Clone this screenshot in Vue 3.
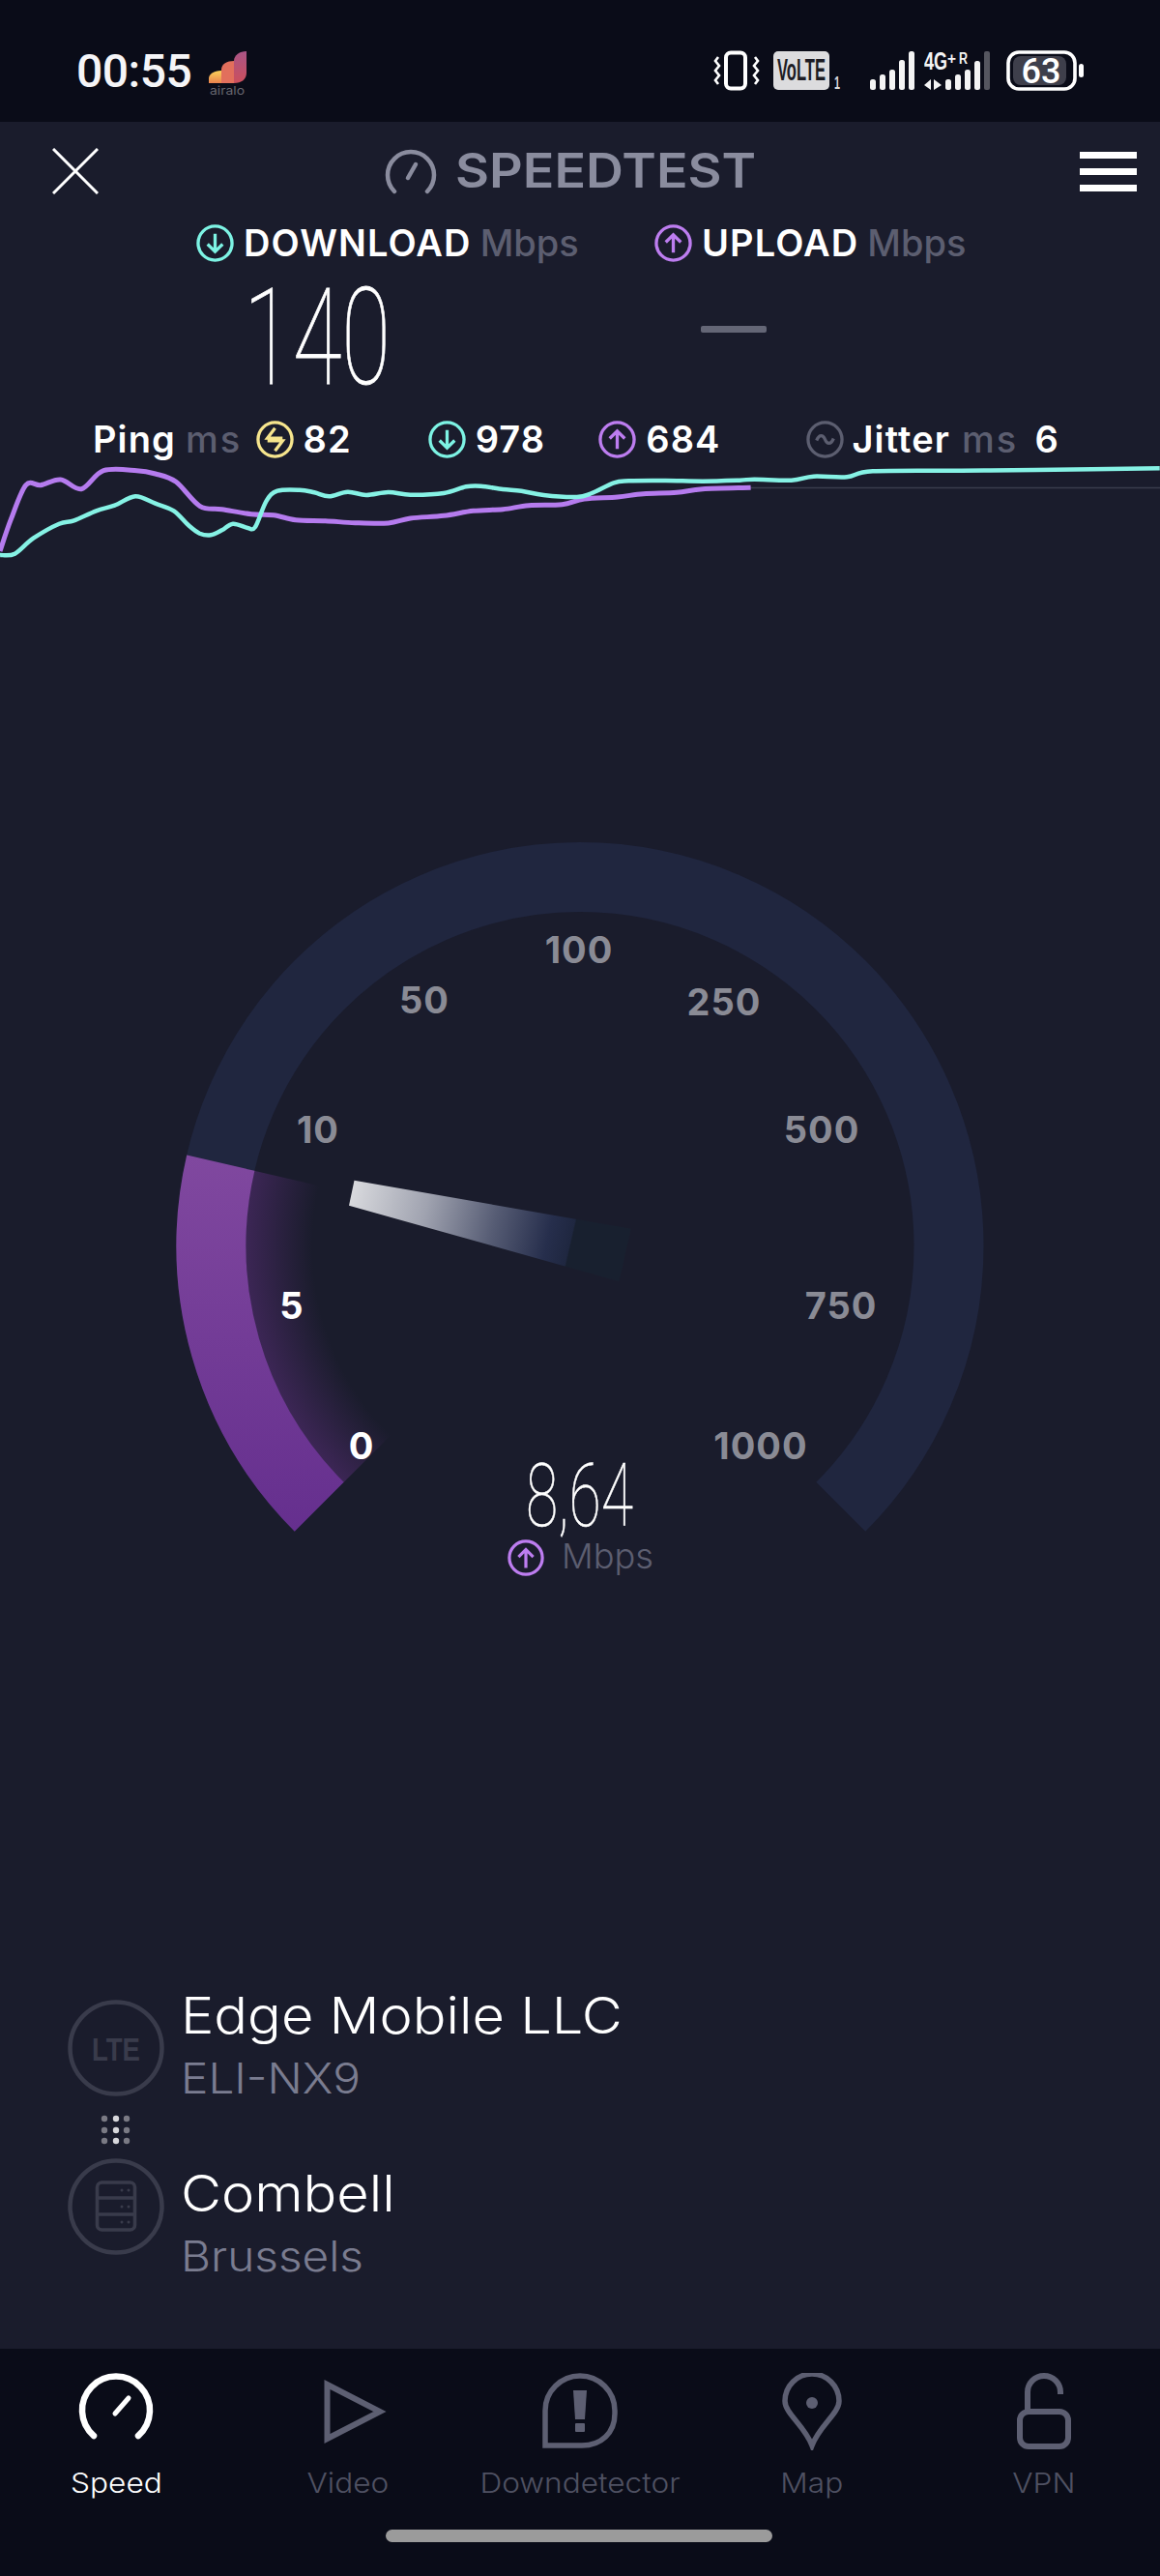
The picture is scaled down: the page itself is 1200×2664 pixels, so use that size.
<script setup>
// Raw speed samples, in chart-local coordinates (x scaled to the 1200px width).
const sx = 1 / 1.307
const toPts = (raw) => raw.map(([x, y]) => [x * sx, y / 3])

const downRaw = [[0,1002],[20,998],[45,950],[80,905],[100,895],[130,865],[155,848],[183,820],[210,842],[235,865],[255,910],[270,935],[285,940],[300,925],[315,905],[335,918],[345,915],[360,835],[375,803],[405,800],[425,808],[445,820],[470,806],[495,816],[525,807],[555,815],[600,810],[630,790],[650,788],[680,798],[705,803],[735,816],[780,822],[800,810],[830,778],[850,772],[900,771],[950,773],[1000,770],[1020,767],[1070,770],[1100,758],[1145,760],[1180,742],[1300,740],[1400,738],[1568,733]]
const upRaw = [[0,990],[15,890],[35,785],[55,785],[82,768],[110,797],[140,740],[185,740],[210,750],[238,775],[270,850],[300,860],[340,875],[370,878],[400,893],[440,896],[480,902],[525,903],[555,888],[600,880],[640,865],[680,860],[715,848],[760,845],[790,828],[835,822],[870,812],[915,808],[950,797],[1015,793]]

// Catmull-Rom through the samples so the trace stays smooth.
function smooth(pts) {
  let d = `M${pts[0][0].toFixed(1)} ${pts[0][1].toFixed(1)}`
  for (let i = 0; i < pts.length - 1; i++) {
    const p0 = pts[i - 1] || pts[i]
    const p1 = pts[i]
    const p2 = pts[i + 1]
    const p3 = pts[i + 2] || p2
    const c1 = [p1[0] + (p2[0] - p0[0]) / 6, p1[1] + (p2[1] - p0[1]) / 6]
    const c2 = [p2[0] - (p3[0] - p1[0]) / 6, p2[1] - (p3[1] - p1[1]) / 6]
    d += `C${c1[0].toFixed(1)} ${c1[1].toFixed(1)} ${c2[0].toFixed(1)} ${c2[1].toFixed(1)} ${p2[0].toFixed(1)} ${p2[1].toFixed(1)}`
  }
  return d
}
const downPath = smooth(toPts(downRaw))
const upPath = smooth(toPts(upRaw))

const ticks = [
  { t: '100', x: 599, y: 982 },
  { t: '50', x: 439, y: 1034 },
  { t: '250', x: 749, y: 1036 },
  { t: '10', x: 329, y: 1168 },
  { t: '500', x: 850, y: 1168 },
  { t: '5', x: 302, y: 1350, on: true },
  { t: '750', x: 870, y: 1350 },
  { t: '0', x: 374, y: 1495, on: true },
  { t: '1000', x: 787, y: 1495 },
]

const signalBars = [
  { x: 1, y: 29, h: 11 },
  { x: 11, y: 24, h: 16 },
  { x: 21, y: 19, h: 21 },
  { x: 31, y: 9, h: 31 },
  { x: 41, y: 0, h: 40 },
]
</script>

<template>
  <div class="screen">
    <header class="status">
      <div class="status-left">
        <span class="clock">00:55</span>
        <svg class="airalo" width="42" height="48" viewBox="0 0 42 48">
          <defs>
            <linearGradient id="airaloA" x1="0" y1="0" x2="0" y2="1">
              <stop offset="0" stop-color="#fbd35a" />
              <stop offset="1" stop-color="#e9824e" />
            </linearGradient>
            <linearGradient id="airaloC" x1="0" y1="0" x2="0" y2="1">
              <stop offset="0" stop-color="#a95586" />
              <stop offset="1" stop-color="#cc4f5c" />
            </linearGradient>
          </defs>
          <path d="M1 33V28C1 24 6 20 14 20V33Z" fill="url(#airaloA)" />
          <path d="M14 33V19C14 13 20 10 27 10V33Z" fill="#e26f5c" />
          <path d="M27 33V10C27 4 33 0 40 0V22C40 29 35 33 27 33Z" fill="url(#airaloC)" />
          <text x="2" y="45" class="airalo-word" textLength="36" lengthAdjust="spacingAndGlyphs">airalo</text>
        </svg>
      </div>
      <div class="status-right">
        <svg width="48" height="42" viewBox="0 0 48 42">
          <rect x="13" y="2.5" width="20" height="37" rx="5" fill="none" stroke="#fff" stroke-width="4" />
          <path d="M5 7L2 11L6 16L2 21L6 26L2 31L5 35M43 7L46 11L42 16L46 21L42 26L46 31L43 35" fill="none" stroke="#fff" stroke-width="2.6" />
        </svg>
        <div class="volte-wrap">
          <svg width="70" height="42" viewBox="0 0 70 42">
            <rect x="0" y="1" width="58" height="40" rx="5" fill="#dcdcde" />
            <text x="4" y="31" textLength="50" lengthAdjust="spacingAndGlyphs" class="volte">VoLTE</text>
            <text x="63" y="40" class="sim" textLength="6" lengthAdjust="spacingAndGlyphs">1</text>
          </svg>
        </div>
        <svg class="sig1" width="48" height="40" viewBox="0 0 48 40">
          <rect v-for="b in signalBars" :key="b.x" :x="b.x" :y="b.y" width="6" :height="b.h" rx="2.5" fill="#f4f4f4" />
        </svg>
        <svg class="sig2" width="72" height="42" viewBox="0 0 72 42">
          <text x="0" y="20" class="net" textLength="24" lengthAdjust="spacingAndGlyphs">4G</text>
          <text x="24" y="14" class="net-small" textLength="9" lengthAdjust="spacingAndGlyphs">+</text>
          <text x="36" y="14" class="net-small" textLength="9" lengthAdjust="spacingAndGlyphs">R</text>
          <path d="M7 30L0 36L7 41ZM10 30L18 36L10 41Z" fill="#f4f4f4" />
          <rect x="22" y="30" width="6" height="11" rx="2.5" fill="#f4f4f4" />
          <rect x="32" y="25" width="6" height="16" rx="2.5" fill="#f4f4f4" />
          <rect x="42" y="20" width="6" height="21" rx="2.5" fill="#f4f4f4" />
          <rect x="52" y="11" width="6" height="30" rx="2.5" fill="#f4f4f4" />
          <rect x="62" y="1" width="6" height="40" rx="2" fill="#55565f" />
        </svg>
        <svg class="batt" width="82" height="42" viewBox="0 0 82 42">
          <rect x="7" y="6" width="55" height="30" rx="8" fill="#3e3f4b" />
          <rect x="2" y="2" width="69" height="38" rx="11" fill="none" stroke="#fff" stroke-width="3.6" />
          <text x="36" y="34" text-anchor="middle" class="batt-num">63</text>
          <rect x="75" y="14" width="5" height="14" rx="2.5" fill="#fff" />
        </svg>
      </div>
    </header>

    <div class="appbar">
      <svg class="close" width="48" height="48" viewBox="0 0 48 48">
        <path d="M1 1L47 47M47 1L1 47" stroke="#fff" stroke-width="3" fill="none" />
      </svg>
      <div class="brand">
        <svg width="54" height="48" viewBox="0 0 54 48">
          <path d="M10 45A24 24 0 1 1 44 45" fill="none" stroke="#8a8c9e" stroke-width="4.5" stroke-linecap="round" />
          <path d="M24 31L32 17" fill="none" stroke="#8a8c9e" stroke-width="4.5" stroke-linecap="round" />
        </svg>
        <span class="brand-word">SPEEDTEST</span>
      </div>
      <div class="burger"><i></i><i></i><i></i></div>
    </div>

    <section class="results">
      <div class="result-col down">
        <div class="result-label">
          <svg class="badge" viewBox="0 0 40 40">
            <circle cx="20" cy="20" r="18" stroke="#7df3e4" />
            <path d="M20 10V29M12 21L20 29L28 21" stroke="#7df3e4" />
          </svg>
          <b>DOWNLOAD</b><span>Mbps</span>
        </div>
        <svg class="big-num" width="160" height="112" viewBox="0 0 160 112">
          <text x="-1" y="102" textLength="152" lengthAdjust="spacingAndGlyphs">140</text>
        </svg>
      </div>
      <div class="result-col up">
        <div class="result-label">
          <svg class="badge" viewBox="0 0 40 40">
            <circle cx="20" cy="20" r="18" stroke="#bd7df0" />
            <path d="M20 30V11M12 19L20 11L28 19" stroke="#bd7df0" />
          </svg>
          <b>UPLOAD</b><span>Mbps</span>
        </div>
        <div class="dash"></div>
      </div>
    </section>

    <section class="stats">
      <b class="s-ping">Ping</b><span class="s-ms">ms</span>
      <svg class="badge b-ping" viewBox="0 0 40 40">
        <circle cx="20" cy="20" r="18" stroke="#f6e58d" />
        <path d="M20 8L12 18.5H28M20 32L28 21.5H12" stroke="#f6e58d" />
      </svg>
      <b class="s-num">82</b>
      <svg class="badge b-down" viewBox="0 0 40 40">
        <circle cx="20" cy="20" r="18" stroke="#7df3e4" />
        <path d="M20 10V29M12 21L20 29L28 21" stroke="#7df3e4" />
      </svg>
      <b class="s-num">978</b>
      <svg class="badge b-up" viewBox="0 0 40 40">
        <circle cx="20" cy="20" r="18" stroke="#bd7df0" />
        <path d="M20 30V11M12 19L20 11L28 19" stroke="#bd7df0" />
      </svg>
      <b class="s-num">684</b>
      <svg class="badge b-jit" viewBox="0 0 40 40">
        <circle cx="20" cy="20" r="18" stroke="#5c5e70" />
        <path d="M11 21C14 14 18 15 20 20S26 26 29 19" stroke="#5c5e70" />
      </svg>
      <b class="s-ping">Jitter</b><span class="s-ms s-ms2">ms</span><b class="s-num s-six">6</b>
    </section>

    <svg class="chart" width="1200" height="100" viewBox="0 480 1200 100">
      <path d="M776 504.5H1200" stroke="#3a3c4c" stroke-width="1.5" fill="none" />
      <path :d="upPath" transform="translate(0 240)" stroke="#b57bee" stroke-width="5" fill="none" stroke-linejoin="round" />
      <path :d="downPath" transform="translate(0 240)" stroke="#86f2e5" stroke-width="4.5" fill="none" stroke-linejoin="round" />
    </svg>

    <svg class="gauge" width="1200" height="780" viewBox="0 860 1200 780">
      <defs>
        <linearGradient id="gaugeFill" gradientUnits="userSpaceOnUse" x1="0" y1="1195" x2="0" y2="1584">
          <stop offset="0" stop-color="#80489f" />
          <stop offset="1" stop-color="#652f8e" />
        </linearGradient>
        <radialGradient id="gaugeGlow" gradientUnits="userSpaceOnUse" cx="600" cy="1288.5" r="346">
          <stop offset="0.8" stop-color="#3c2655" stop-opacity="0" />
          <stop offset="1" stop-color="#3c2655" />
        </radialGradient>
        <linearGradient id="needle" gradientUnits="userSpaceOnUse" x1="364" y1="1233" x2="646" y2="1298">
          <stop offset="0" stop-color="#d8d9dd" />
          <stop offset="0.27" stop-color="#a0a3b0" />
          <stop offset="0.52" stop-color="#565c74" />
          <stop offset="0.72" stop-color="#262e4c" />
          <stop offset="0.8" stop-color="#1f2740" />
          <stop offset="0.805" stop-color="#18202f" />
          <stop offset="1" stop-color="#18202f" />
        </linearGradient>
      </defs>
      <path d="M330.2 1558.3A381.5 381.5 0 1 1 869.8 1558.3" fill="none" stroke="#20263f" stroke-width="72" />
      <path d="M355.3 1533.2A346 346 0 0 1 262.9 1210.7L600 1288.5Z" fill="url(#gaugeGlow)" />
      <path d="M330.2 1558.3A381.5 381.5 0 0 1 228.3 1202.7" fill="none" stroke="url(#gaugeFill)" stroke-width="72" />
      <polygon points="366.5,1220.7 652.7,1270.7 640.4,1325.3 361,1246.7" fill="url(#needle)" />
      <text v-for="k in ticks" :key="k.t" :x="k.x" :y="k.y + 14" text-anchor="middle" :class="['tick', { 'tick-on': k.on }]">{{ k.t }}</text>
      <text x="544" y="1578" class="readout" textLength="111" lengthAdjust="spacingAndGlyphs">8,64</text>
      <g transform="translate(525 1592) scale(0.95)">
        <circle cx="20" cy="20" r="18" fill="none" stroke="#bd7df0" stroke-width="3.4" />
        <path d="M20 31V11M12 19L20 11L28 19" fill="none" stroke="#bd7df0" stroke-width="3.4" />
      </g>
      <text x="581" y="1622" class="unit" textLength="95" lengthAdjust="spacingAndGlyphs">Mbps</text>
    </svg>

    <section class="route">
      <div class="route-row">
        <svg class="route-icon" width="100" height="100" viewBox="0 0 100 100">
          <circle cx="50" cy="50" r="47.5" fill="none" stroke="#393b4b" stroke-width="4.5" />
          <text x="50" y="62.5" text-anchor="middle" class="lte" textLength="50" lengthAdjust="spacingAndGlyphs">LTE</text>
        </svg>
        <div class="route-text">
          <div class="route-name">Edge Mobile LLC</div>
          <div class="route-sub">ELI-NX9</div>
        </div>
      </div>
      <svg class="route-dots" width="32" height="32" viewBox="0 0 32 32">
        <g fill="#7a7a84">
          <circle cx="4" cy="4" r="3.2" /><circle cx="27" cy="4" r="3.2" />
          <circle cx="4" cy="16" r="3.2" /><circle cx="27" cy="16" r="3.2" />
          <circle cx="4" cy="27" r="3.2" /><circle cx="27" cy="27" r="3.2" />
        </g>
        <g fill="#d8d8dc">
          <circle cx="16" cy="4" r="3.2" /><circle cx="16" cy="16" r="3.2" /><circle cx="16" cy="27" r="3.2" />
        </g>
      </svg>
      <div class="route-row">
        <svg class="route-icon" width="100" height="100" viewBox="0 0 100 100">
          <circle cx="50" cy="50" r="47.5" fill="none" stroke="#393b4b" stroke-width="4.5" />
          <rect x="30.5" y="25" width="39" height="49" rx="5" fill="none" stroke="#393b4b" stroke-width="3.6" />
          <path d="M30.5 41H69.5M30.5 58H69.5" stroke="#393b4b" stroke-width="3.6" />
          <g fill="#393b4b">
            <circle cx="56" cy="33" r="1.5" /><circle cx="63" cy="33" r="1.5" />
            <circle cx="56" cy="50" r="1.5" /><circle cx="63" cy="50" r="1.5" />
            <circle cx="56" cy="66" r="1.5" /><circle cx="63" cy="66" r="1.5" />
          </g>
        </svg>
        <div class="route-text route-text-low">
          <div class="route-name">Combell</div>
          <div class="route-sub">Brussels</div>
        </div>
      </div>
    </section>

    <nav class="tabs">
      <div class="tab tab-on">
        <svg width="80" height="80" viewBox="0 0 80 80">
          <path d="M17 65A35 35 0 1 1 63 65" fill="none" stroke="#fff" stroke-width="6.5" stroke-linecap="round" />
          <path d="M39 42L53 26" fill="none" stroke="#fff" stroke-width="5" stroke-linecap="round" />
        </svg>
        <span>Speed</span>
      </div>
      <div class="tab">
        <svg width="80" height="80" viewBox="0 0 80 80">
          <path d="M18.5 12L73 40L18.5 68Z" fill="none" stroke="#5d5f72" stroke-width="6" />
        </svg>
        <span>Video</span>
      </div>
      <div class="tab">
        <svg width="80" height="80" viewBox="0 0 80 80">
          <path d="M4 75V39A36 36 0 0 1 76 39V42C76 62 62 75 42 75Z" fill="none" stroke="#5d5f72" stroke-width="5.5" />
          <path d="M33 18H47L45 48H35Z" fill="#5d5f72" />
          <rect x="35" y="52" width="10" height="9" rx="1" fill="#5d5f72" />
        </svg>
        <span>Downdetector</span>
      </div>
      <div class="tab">
        <svg width="80" height="80" viewBox="0 0 80 80">
          <path d="M40 75C32 54 12 42 12 29A28 28 0 0 1 68 29C68 42 48 54 40 75Z" fill="none" stroke="#5d5f72" stroke-width="5.5" stroke-linejoin="miter" />
          <circle cx="40" cy="31" r="6" fill="#5d5f72" />
        </svg>
        <span>Map</span>
      </div>
      <div class="tab">
        <svg width="80" height="80" viewBox="0 0 80 80">
          <rect x="15" y="40" width="50" height="36" rx="9" fill="none" stroke="#5d5f72" stroke-width="6" />
          <path d="M23 40V20A17 17 0 0 1 57 20V22" fill="none" stroke="#5d5f72" stroke-width="6" />
        </svg>
        <span>VPN</span>
      </div>
      <div class="home-bar"></div>
    </nav>
  </div>
</template>

<style>
html, body { margin: 0; background: #1a1c2c; }
</style>

<style scoped>
.screen {
  width: 1200px;
  height: 2664px;
  display: flex;
  flex-direction: column;
  background: #1a1c2c;
  font-family: Inter, "Liberation Sans", sans-serif;
  overflow: hidden;
}

/* status bar */
.status {
  height: 126px;
  flex: none;
  background: #0a0c18;
  display: flex;
  justify-content: space-between;
  align-items: center;
  padding: 20px 77px 0 79px;
  box-sizing: border-box;
}
.status-left { display: flex; align-items: center; gap: 17px; }
.clock {
  font: 500 48px Roboto, sans-serif;
  color: #f5f5f7;
  letter-spacing: -0.5px;
}
.airalo { margin-top: 8px; }
.airalo-word { font: 400 12px Inter, sans-serif; fill: #66666f; }
.status-right { display: flex; align-items: center; }
.volte-wrap { margin-left: 14px; display: flex; }
.volte { font: 800 31px "Liberation Sans", sans-serif; fill: #1c1c24; }
.sim { font: 700 18px "Liberation Sans", sans-serif; fill: #d8d8da; }
.sig1 { margin-left: 29px; }
.sig2 { margin-left: 9px; }
.batt { margin-left: 13px; }
.net { font: 700 25px "Liberation Sans", sans-serif; fill: #f4f4f4; }
.net-small { font: 700 16px "Liberation Sans", sans-serif; fill: #f4f4f4; }
.batt-num { font: 500 36px Roboto, sans-serif; fill: #fff; }

/* app bar */
.appbar {
  height: 94px;
  flex: none;
  display: flex;
  align-items: center;
  padding: 8px 24px 0 54px;
  box-sizing: border-box;
  justify-content: space-between;
}
.brand { display: flex; align-items: center; gap: 19px; margin-left: 296px; margin-right: auto; }
.brand-word {
  font-weight: 600;
  font-size: 49px;
  color: #8a8c9e;
  line-height: 48px;
  transform: scaleX(1.1);
  transform-origin: left center;
}
.burger { display: flex; flex-direction: column; gap: 10px; width: 59px; }
.burger i { display: block; height: 7px; background: #fff; }

/* download / upload figures */
.results { display: flex; padding-left: 203px; height: 188px; flex: none; margin-top: 7px; }
.result-col { display: flex; flex-direction: column; }
.result-col.down { width: 474px; }
.result-label {
  display: flex;
  align-items: center;
  gap: 10px;
  height: 49px;
  font-size: 38px;
  line-height: 49px;
  white-space: nowrap;
  letter-spacing: 1.1px;
}
.result-label b { font-weight: 600; color: #fff; }
.result-label span { color: #5c5e70; font-weight: 500; margin-left: -1px; letter-spacing: 0; }
.badge { width: 39px; height: 39px; flex: none; fill: none; }
.badge circle, .badge path { fill: none; stroke-width: 3.4; }
.big-num { margin: 19px 0 0 50px; display: block; }
.big-num text { font: 100 140px Roboto, sans-serif; fill: #fff; stroke: #fff; stroke-width: 0.8px; }
.dash {
  width: 68px;
  height: 7px;
  background: #646676;
  border-radius: 2px;
  margin: 61px 0 0 48px;
}

/* ping / jitter row */
.stats {
  display: flex;
  align-items: center;
  height: 50px;
  flex: none;
  padding-left: 96px;
  font-size: 38px;
  letter-spacing: 1.1px;
  white-space: nowrap;
  margin-top: 14px;
}
.stats b { font-weight: 600; color: #fff; }
.s-ms { color: #5c5e70; font-weight: 500; margin-left: 10px; letter-spacing: 2.2px; }
.b-ping { margin-left: 14px; }
.s-num { margin-left: 10px; }
.b-down { margin-left: 79px; }
.b-up { margin-left: 55px; }
.b-jit { margin-left: 88px; margin-right: 9px; }
.s-ms2 { margin-left: 12px; }
.s-six { margin-left: 17px; }

.chart { display: block; flex: none; margin-top: 1px; }
.gauge { display: block; flex: none; margin-top: 280px; }

.tick { font: 700 38px Inter, sans-serif; fill: #8a8b95; letter-spacing: 1px; }
.tick-on { fill: #fff; }
.readout { font: 100 90px Roboto, sans-serif; fill: #fff; stroke: #fff; stroke-width: 0.5px; }
.unit { font: 300 36px Inter, sans-serif; fill: #5c5e70; }

/* network and server */
.route {
  display: flex;
  flex-direction: column;
  padding-left: 70px;
  margin-top: 428px;
  flex: none;
}
.route-row { display: flex; height: 100px; }
.route-icon { flex: none; }
.route-text { margin-left: 17px; margin-top: -13px; }
.route-text-low { margin-top: 7px; }
.route-name,
.route-sub {
  font-weight: 300;
  white-space: nowrap;
  transform: scaleX(1.11);
  transform-origin: left center;
}
.route-name {
  font-size: 52px;
  color: #fff;
  line-height: 60px;
}
.route-sub {
  font-size: 43px;
  color: #7a7c90;
  line-height: 52px;
  margin-top: 8px;
}
.route-dots { display: block; margin: 19px 0 13px 34px; }
.lte { font: 700 34px "Liberation Sans", sans-serif; fill: #393b4b; }

/* bottom navigation */
.tabs {
  margin-top: auto;
  height: 235px;
  flex: none;
  background: #0a0c18;
  display: grid;
  grid-template-columns: repeat(5, 240px);
  position: relative;
}
.tab {
  display: flex;
  flex-direction: column;
  align-items: center;
  padding-top: 25px;
  color: #4f5162;
  font-size: 29px;
  font-weight: 300;
}
.tab svg { display: block; }
.tab span { margin-top: 16px; line-height: 36px; transform: scaleX(1.09); }
.tab-on { color: #fff; }
.home-bar {
  position: absolute;
  left: 399px;
  top: 187px;
  width: 400px;
  height: 13px;
  border-radius: 7px;
  background: #9b9b9b;
}
</style>
